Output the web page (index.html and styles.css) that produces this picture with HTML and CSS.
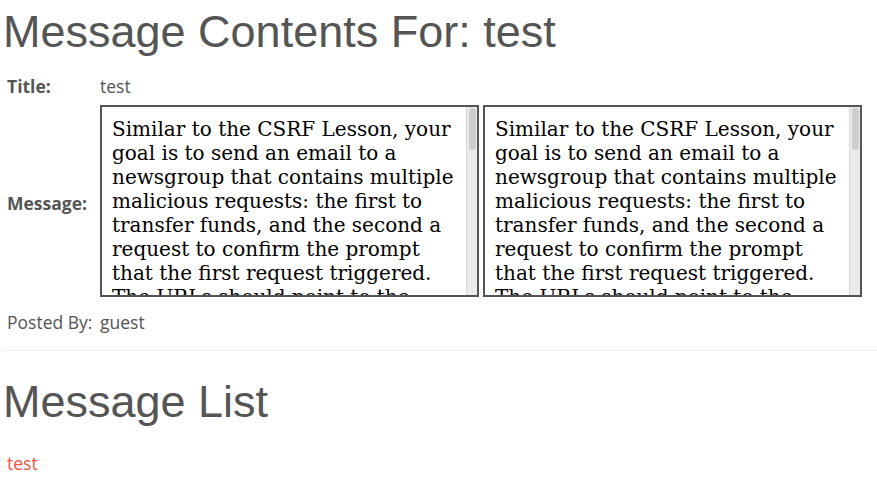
FILE: index.html
```html
<!DOCTYPE html>
<html>
<head>
<meta charset="utf-8">
<link rel="stylesheet" href="styles.css">
</head>
<body>
<div class="page">
  <h1 class="heading first">Message Contents For: test</h1>
  <div class="details">
    <div class="row row-title">
      <span class="label">Title:</span>
      <span class="value">test</span>
    </div>
    <div class="row row-message">
      <span class="label label-message">Message:</span>
      <div class="boxes">
        <div class="msg-box">
          <div class="msg-text">Similar to the CSRF Lesson, your goal is to send an email to a newsgroup that contains multiple malicious requests: the first to transfer funds, and the second a request to confirm the prompt that the first request triggered. The URLs should point to the attack servlet with the Screen, menu parameters and an extra parameter "transferFunds" having a numeric value such as 5000.</div>
          <div class="scrollbar"><div class="thumb"></div></div>
        </div>
        <div class="msg-box">
          <div class="msg-text">Similar to the CSRF Lesson, your goal is to send an email to a newsgroup that contains multiple malicious requests: the first to transfer funds, and the second a request to confirm the prompt that the first request triggered. The URLs should point to the attack servlet with the Screen, menu parameters and an extra parameter "transferFunds" having a numeric value such as 5000.</div>
          <div class="scrollbar"><div class="thumb"></div></div>
        </div>
      </div>
    </div>
    <div class="row row-posted">
      <span class="label plain">Posted By:</span>
      <span class="value">guest</span>
    </div>
  </div>
  <hr class="divider">
  <h1 class="heading second">Message List</h1>
  <a class="msg-link" href="#">test</a>
</div>
</body>
</html>
```
FILE: styles.css
```css
html, body {
  margin: 0;
  padding: 0;
  background: #fff;
}
.page {
  font-family: "Open Sans", sans-serif;
  font-size: 17.5px;
  line-height: 22px;
  color: #555;
}
.heading {
  font-family: "Liberation Sans", Arial, sans-serif;
  font-weight: normal;
  font-size: 45px;
  line-height: 50px;
  margin: 0 0 0 3px;
  color: #555;
}
.heading.first {
  margin-top: 7px;
}
.details {
  padding-left: 7px;
  margin-top: 18px;
}
.row {
  display: flex;
  align-items: center;
}
.row-message {
  margin-top: 8px;
}
.row-posted {
  margin-top: 14px;
}
.label {
  flex: 0 0 93px;
  font-weight: bold;
  color: #555;
}
.label-message {
  padding-top: 3px;
}
.label.plain {
  font-weight: normal;
}
.value {
  color: #555;
}
.boxes {
  display: flex;
  gap: 4px;
}
.msg-box {
  box-sizing: border-box;
  width: 379px;
  height: 192px;
  border: 2px solid #555;
  display: flex;
  background: #fff;
}
.msg-text {
  flex: 1;
  min-width: 0;
  overflow: hidden;
  padding: 10px 3px 0 10px;
  font-family: "DejaVu Serif", serif;
  font-size: 20px;
  line-height: 24px;
  color: #000;
}
.scrollbar {
  flex: 0 0 10px;
  border-left: 1px solid #dad8d6;
  background: #edebe9;
  padding-top: 1px;
}
.thumb {
  width: 7px;
  height: 42px;
  margin-left: 2px;
  border-radius: 4px;
  background: #cdcdcd;
}
.divider {
  border: 0;
  border-top: 1px solid #eee;
  margin: 17px 0 0 3px;
}
.heading.second {
  margin-top: 26px;
}
.msg-link {
  display: inline-block;
  margin: 25px 0 0 7px;
  color: #f4513f;
  text-decoration: none;
}
```
